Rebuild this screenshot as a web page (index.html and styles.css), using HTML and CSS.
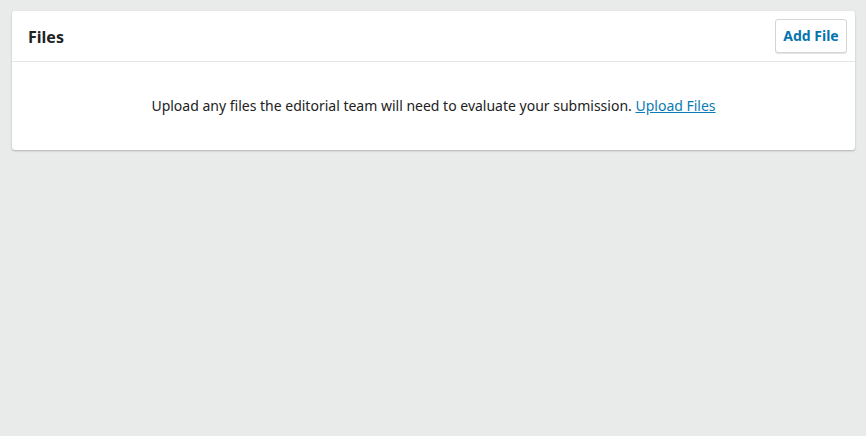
FILE: index.html
```html
<!DOCTYPE html>
<html>
<head>
<meta charset="utf-8">
<link rel="stylesheet" href="styles.css">
</head>
<body>
<div class="page">
  <section class="panel">
    <header class="panel-header">
      <h2 class="panel-title">Files</h2>
      <button class="btn">Add File</button>
    </header>
    <div class="panel-body">
      Upload any files the editorial team will need to evaluate your submission. <a class="link" href="#">Upload Files</a>
    </div>
  </section>
</div>
</body>
</html>
```

FILE: styles.css
```css
html, body {
  margin: 0;
  padding: 0;
  background: #e9ebea;
  font-family: "Noto Sans", sans-serif;
  color: #222;
}
.page {
  padding: 11px 11px 0 12px;
  height: 436px;
  box-sizing: border-box;
}
.panel {
  background: #fff;
  border-radius: 3px;
  box-shadow: 0 1px 2px rgba(0,0,0,0.25);
}
.panel-header {
  display: flex;
  align-items: center;
  justify-content: space-between;
  height: 51px;
  box-sizing: border-box;
  padding: 1px 8px 0 16px;
  border-bottom: 1px solid #e5e5e5;
}
.panel-title {
  margin: 0;
  font-size: 16px;
  font-weight: 700;
  color: #222;
  line-height: 20px;
}
.btn {
  font-family: "Noto Sans", sans-serif;
  font-size: 14px;
  font-weight: 700;
  color: #0774ae;
  background: #fff;
  border: 1px solid #d5d5d5;
  border-radius: 3px;
  height: 34px;
  width: 72px;
  padding: 0;
  margin-top: -2px;
  box-shadow: 0 1px 0 #e5e5e5;
}
.panel-body {
  text-align: center;
  font-size: 14px;
  line-height: 20px;
  padding: 34px 16px 34px;
  color: #222;
}
.link {
  color: #0a7bb5;
  text-decoration: underline;
}
```
